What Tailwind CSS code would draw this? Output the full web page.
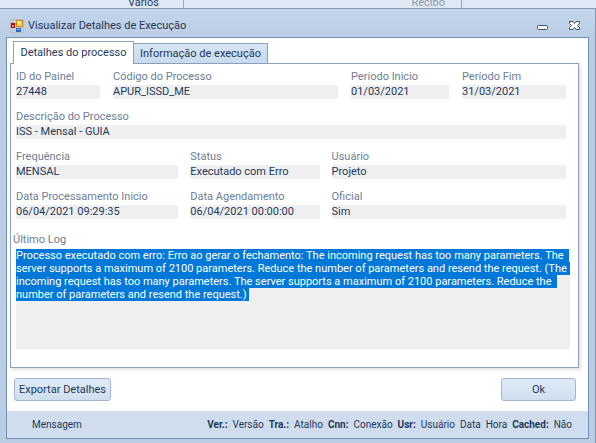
<!DOCTYPE html>
<html lang="pt-BR">
  <head>
    <meta charset="UTF-8" />
    <meta name="viewport" content="width=device-width, initial-scale=1.0" />
    <title>Visualizar Detalhes de Execução</title>
    <script src="https://cdn.jsdelivr.net/npm/@tailwindcss/browser@4"></script>
  </head>
  <body
    class="flex min-h-screen flex-col bg-[#dfe9f5] font-[Tahoma,Roboto,sans-serif] text-[11px] leading-[14px] text-[#1e395b]"
  >
    <!-- Faixa da janela principal, atrás do diálogo -->
    <div class="flex h-2 shrink-0 items-end overflow-hidden leading-[11px]">
      <span class="flex w-[184px] justify-end border-r border-[#98a9bf] pr-6">Varios</span>
      <span class="flex w-[278px] justify-end border-r border-[#98a9bf] pr-4 text-[#8d9aab]">Recibo</span>
    </div>

    <!-- Diálogo -->
    <main
      class="flex grow flex-col border-t border-r border-[#8a9bb0] bg-[#bdd0e8] bg-linear-to-b from-[#c3d5ec] to-[#bbcde5] to-[30px] px-[6px] pb-1"
    >
      <header class="flex h-7 items-center pt-[6px] pr-2 pl-1">
        <svg class="h-[14px] w-[14px]" viewBox="0 0 14 14" shape-rendering="crispEdges">
          <path d="M.5.5h13v13H.5z" fill="#c3cede" stroke="#b9bcc3" />
          <path d="M1 4h4v5H1z" fill="#a80f0f" />
          <path d="M2 6h2v2H2z" fill="#e88a78" />
          <path d="M6 1h7v7H6z" fill="#c88a10" />
          <path d="M7 2h5v5H7z" fill="#ffd75a" />
          <path d="M7 2h3v2H7z" fill="#fff0b0" />
          <path d="M6 9h5v4H6z" fill="#2f66c4" />
          <path d="M7 10h3v1H7z" fill="#8db8f5" />
        </svg>
        <h1 class="ml-1 grow">Visualizar Detalhes de Execução</h1>
        <button type="button" aria-label="Minimizar" class="mr-5">
          <svg class="h-3 w-3" viewBox="0 0 12 12">
            <rect x=".5" y="5.500" width="10" height="4" rx="1" fill="#f4f8fd" stroke="#4a525e" />
          </svg>
        </button>
        <button type="button" aria-label="Fechar">
          <svg class="h-3 w-3" viewBox="0 0 12 12">
            <path
              d="M.5 1.500H4l1.500 2 1.500-2h3.500v2l-2 2 2 2v2H7l-1.500-2-1.500 2H.5v-2l2-2-2-2z"
              fill="#f4f8fd"
              stroke="#4a525e"
            />
          </svg>
        </button>
      </header>

      <div class="flex grow flex-col border border-[#6f91b3] bg-white">
        <div class="flex grow flex-col px-[3px] pt-[3px] pr-[9px]">
          <div class="flex items-end pl-[3px]" role="tablist">
            <button
              type="button"
              role="tab"
              aria-selected="true"
              class="relative z-10 -mb-px h-[23px] w-[121px] border border-b-0 border-[#8ba0bc] bg-white"
            >
              Detalhes do processo
            </button>
            <button
              type="button"
              role="tab"
              aria-selected="false"
              class="h-[20px] w-[134px] border border-b-0 border-l-0 border-[#8ba0bc] bg-linear-to-b from-[#d6e5f5] to-[#c9daee]"
            >
              Informação de execução
            </button>
          </div>

          <section
            class="grow border border-[#8ba0bc] px-[5px] pt-[6px] shadow-[2px_2px_3px_#0000001f]"
            role="tabpanel"
          >
            <div class="flex flex-col gap-[11px] pr-[7px]">
              <div class="grid grid-cols-[84fr_225fr_98fr_104fr] gap-x-[13px]">
                <div class="flex min-w-0 flex-col gap-px">
                  <label for="id" class="text-[#6d7d95]">ID do Painel</label>
                  <input id="id" readonly value="27448" class="h-[14px] w-full bg-[#efefef]" />
                </div>
                <div class="flex min-w-0 flex-col gap-px">
                  <label for="codigo" class="text-[#6d7d95]">Código do Processo</label>
                  <input id="codigo" readonly value="APUR_ISSD_ME" class="h-[14px] w-full bg-[#efefef]" />
                </div>
                <div class="flex min-w-0 flex-col gap-px">
                  <label for="inicio" class="text-[#6d7d95]">Período Inicio</label>
                  <input id="inicio" readonly value="01/03/2021" class="h-[14px] w-full bg-[#efefef]" />
                </div>
                <div class="flex min-w-0 flex-col gap-px">
                  <label for="fim" class="text-[#6d7d95]">Período Fim</label>
                  <input id="fim" readonly value="31/03/2021" class="h-[14px] w-full bg-[#efefef]" />
                </div>
              </div>

              <div class="flex min-w-0 flex-col gap-px">
                <label for="descricao" class="text-[#6d7d95]">Descrição do Processo</label>
                <input id="descricao" readonly value="ISS - Mensal - GUIA" class="h-[14px] w-full bg-[#efefef]" />
              </div>

              <div class="grid grid-cols-[162fr_129fr_234fr] gap-x-[12px] gap-y-[11px]">
                <div class="flex min-w-0 flex-col gap-px">
                  <label for="frequencia" class="text-[#6d7d95]">Frequência</label>
                  <input id="frequencia" readonly value="MENSAL" class="h-[14px] w-full bg-[#efefef]" />
                </div>
                <div class="flex min-w-0 flex-col gap-px">
                  <label for="status" class="text-[#6d7d95]">Status</label>
                  <input id="status" readonly value="Executado com Erro" class="h-[14px] w-full bg-[#efefef]" />
                </div>
                <div class="flex min-w-0 flex-col gap-px">
                  <label for="usuario" class="text-[#6d7d95]">Usuário</label>
                  <input id="usuario" readonly value="Projeto" class="h-[14px] w-full bg-[#efefef]" />
                </div>
                <div class="flex min-w-0 flex-col gap-px">
                  <label for="processamento" class="text-[#6d7d95]">Data Processamento Inicio</label>
                  <input id="processamento" readonly value="06/04/2021 09:29:35" class="h-[14px] w-full bg-[#efefef]" />
                </div>
                <div class="flex min-w-0 flex-col gap-px">
                  <label for="agendamento" class="text-[#6d7d95]">Data Agendamento</label>
                  <input id="agendamento" readonly value="06/04/2021 00:00:00" class="h-[14px] w-full bg-[#efefef]" />
                </div>
                <div class="flex min-w-0 flex-col gap-px">
                  <label for="oficial" class="text-[#6d7d95]">Oficial</label>
                  <input id="oficial" readonly value="Sim" class="h-[14px] w-full bg-[#efefef]" />
                </div>
              </div>
            </div>

            <div class="-ml-[3px] flex flex-col gap-[2px] pt-[14px] pr-[3px] pb-[18px]">
              <label for="log" class="text-[#6d7d95]">Último Log</label>
              <textarea
                id="log"
                readonly
                spellcheck="false"
                class="ml-[3px] h-[100px] resize-none overflow-hidden bg-[#efefef] leading-[13px] whitespace-pre outline-none selection:bg-[#0078d7] selection:text-white"
              >
Processo executado com erro: Erro ao gerar o fechamento: The incoming request has too many parameters. The 
server supports a maximum of 2100 parameters. Reduce the number of parameters and resend the request. (The 
incoming request has too many parameters. The server supports a maximum of 2100 parameters. Reduce the 
number of parameters and resend the request.) </textarea
              >
            </div>
          </section>
        </div>

        <div class="flex justify-between py-[10px] pr-3 pl-[7px]">
          <button
            type="button"
            class="h-[23px] w-[97px] rounded-[3px] border border-[#a3b5d0] bg-linear-to-b from-[#e0ebf8] to-[#cfdeee]"
          >
            Exportar Detalhes
          </button>
          <button
            type="button"
            class="h-[23px] w-[75px] rounded-[3px] border border-[#a3b5d0] bg-linear-to-b from-[#e0ebf8] to-[#cfdeee]"
          >
            Ok
          </button>
        </div>

        <footer class="flex h-[27px] items-center justify-between bg-[#cfddee] pr-4 pl-[25px] text-[10px]">
          <span>Mensagem</span>
          <div class="flex gap-[5px]">
            <b>Ver.:</b><span>Versão</span>
            <b>Tra.:</b><span>Atalho</span>
            <b>Cnn:</b><span>Conexão</span>
            <b>Usr:</b><span>Usuário</span>
            <span>Data</span>
            <span>Hora</span>
            <b>Cached:</b><span>Não</span>
          </div>
        </footer>
      </div>
    </main>

    <script>
      const log = document.getElementById("log");
      log.focus();
      log.select();
    </script>
  </body>
</html>
